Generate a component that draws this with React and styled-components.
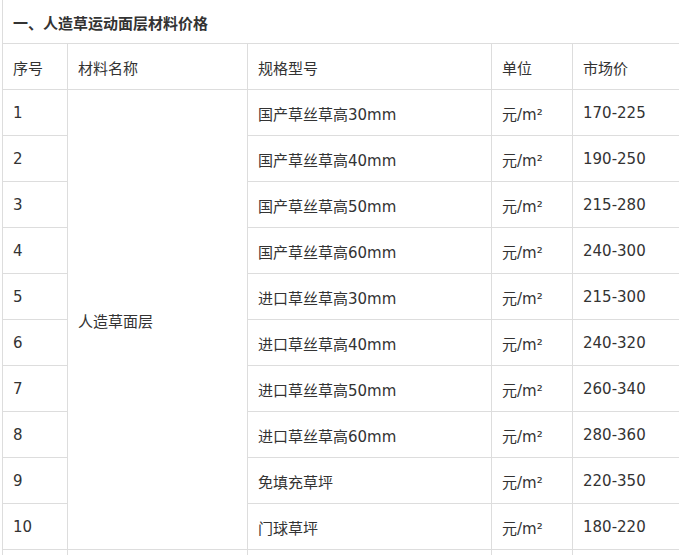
import React from "react";
import styled, { createGlobalStyle } from "styled-components";

const Global = createGlobalStyle`
  html, body { margin: 0; padding: 0; background: #fff; }
  body { font-family: "DejaVu Sans", "Noto Sans CJK SC", sans-serif; color: #333; }
`;

const Page = styled.div`
  padding-left: 2px;
  width: 677px;
  height: 555px;
  overflow: hidden;
`;

const Table = styled.table`
  border-collapse: collapse;
  table-layout: fixed;
  width: 677px;
  font-size: 15px;
  color: #333;
`;

const TitleCell = styled.td`
  height: 42px;
  padding: 1px 10px 0;
  border: 1px solid #ddd;
  border-top: none;
  font-weight: bold;
  vertical-align: middle;
  white-space: nowrap;
`;

const Cell = styled.td`
  height: 44px;
  padding: 1px 10px 0;
  border: 1px solid #ddd;
  vertical-align: middle;
  white-space: nowrap;
`;

const rows = [
  ["国产草丝草高30mm", "170-225"],
  ["国产草丝草高40mm", "190-250"],
  ["国产草丝草高50mm", "215-280"],
  ["国产草丝草高60mm", "240-300"],
  ["进口草丝草高30mm", "215-300"],
  ["进口草丝草高40mm", "240-320"],
  ["进口草丝草高50mm", "260-340"],
  ["进口草丝草高60mm", "280-360"],
  ["免填充草坪", "220-350"],
  ["门球草坪", "180-220"],
];

export default function App() {
  return (
    <Page>
      <Global />
      <Table>
        <colgroup>
          <col style={{ width: 65 }} />
          <col style={{ width: 180 }} />
          <col style={{ width: 244 }} />
          <col style={{ width: 81 }} />
          <col style={{ width: 107 }} />
        </colgroup>
        <tbody>
          <tr>
            <TitleCell colSpan={5}>一、人造草运动面层材料价格</TitleCell>
          </tr>
          <tr>
            <Cell>序号</Cell>
            <Cell>材料名称</Cell>
            <Cell>规格型号</Cell>
            <Cell>单位</Cell>
            <Cell>市场价</Cell>
          </tr>
          {rows.map(([spec, price], i) => (
            <tr key={i}>
              <Cell>{i + 1}</Cell>
              {i === 0 && <Cell rowSpan={10}>人造草面层</Cell>}
              <Cell>{spec}</Cell>
              <Cell>元/m²</Cell>
              <Cell>{price}</Cell>
            </tr>
          ))}
          <tr>
            <Cell />
            <Cell />
            <Cell />
            <Cell />
            <Cell />
          </tr>
        </tbody>
      </Table>
    </Page>
  );
}
